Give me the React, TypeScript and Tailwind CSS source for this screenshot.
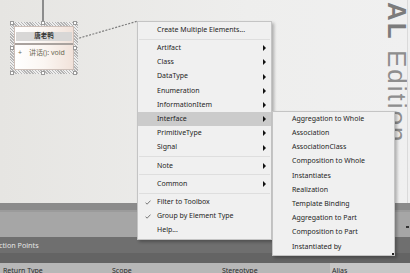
import React from "react";

type Item = { label?: string; sep?: boolean; arrow?: boolean; check?: boolean; active?: boolean };

const mainItems: Item[] = [
  { label: "Create Multiple Elements..." },
  { sep: true },
  { label: "Artifact", arrow: true },
  { label: "Class", arrow: true },
  { label: "DataType", arrow: true },
  { label: "Enumeration", arrow: true },
  { label: "InformationItem", arrow: true },
  { label: "Interface", arrow: true, active: true },
  { label: "PrimitiveType", arrow: true },
  { label: "Signal", arrow: true },
  { sep: true },
  { label: "Note", arrow: true },
  { sep: true },
  { label: "Common", arrow: true },
  { sep: true },
  { label: "Filter to Toolbox", check: true },
  { label: "Group by Element Type", check: true },
  { label: "Help..." },
];

const subItems = [
  "Aggregation to Whole",
  "Association",
  "AssociationClass",
  "Composition to Whole",
  "Instantiates",
  "Realization",
  "Template Binding",
  "Aggregation to Part",
  "Composition to Part",
  "Instantiated by",
];

function Arrow() {
  return <span className="ml-auto w-0 h-0 border-y-[3px] border-y-transparent border-l-[3px] border-l-[#111]" />;
}

function Check() {
  return (
    <svg className="absolute left-[7px] top-[5px]" width="6" height="5" viewBox="0 0 6 5">
      <path d="M0.5 2.6 L2.1 4.2 L5.5 0.6" stroke="#6a6a6a" strokeWidth="0.9" fill="none" />
    </svg>
  );
}

function Handle({ cls }: { cls: string }) {
  return <div className={`absolute w-[4px] h-[4px] bg-white border border-[#9a9a9a] ${cls}`} />;
}

export default function App() {
  return (
    <div className="relative w-[410px] h-[273px] overflow-hidden flex flex-col font-['Noto_Sans','Noto_Sans_CJK_SC',sans-serif] text-[7px] text-[#1e1e1e]">
      {/* Canvas */}
      <div className="relative h-[203px] shrink-0 bg-[linear-gradient(90deg,#e6e5e2,#eeeeed_60%,#f0f0f0)]">
        {/* watermark */}
        <div className="absolute left-[384px] top-[2px] [writing-mode:vertical-rl] font-['Liberation_Sans',sans-serif] text-[26px] leading-none tracking-[2px] whitespace-nowrap">
          <span className="font-bold text-[#7c7c7c]">AL</span>
          <span className="text-[#8e8e8e]"> Edition</span>
        </div>
        <div className="absolute right-[2px] top-0 bottom-0 w-px bg-[#dadada]" />

        {/* vertical connector from top */}
        <div className="absolute left-[42px] top-0 w-[2px] h-[22px] bg-[#8c8c8c]" />

        {/* dotted connector */}
        <svg className="absolute left-0 top-0" width="410" height="203">
          <line x1="76" y1="39" x2="138" y2="21" stroke="#7e7e7e" strokeWidth="1.2" strokeDasharray="2 1.4" />
        </svg>

        {/* class element */}
        <div className="absolute left-[10px] top-[22px] w-[68px] h-[52px] p-[4px] bg-[repeating-linear-gradient(45deg,#b4b4b4_0px,#b4b4b4_1px,#eeeeee_1px,#eeeeee_2px)]">
          <div className="w-full h-full bg-[linear-gradient(90deg,#ffffff,#fbf6f2_50%,#f1e2da)] border border-[#cdbfb8] flex flex-col">
            <div className="mt-[5px] mx-[1px] h-[9px] bg-[#d8d7d6] flex items-center justify-center text-[6.5px] font-bold text-[#333] leading-none">
              唐老鸭
            </div>
            <div className="mt-[2px] h-[2px] border-y border-[#a9a29e]" />
            <div className="flex items-center h-[10px] mt-[2px] text-[7px] text-[#6c6a55] leading-none">
              <span className="ml-[3px] w-[11px]">+</span>
              <span>讲话(): void</span>
            </div>
          </div>
          <Handle cls="left-0 -top-[1px]" />
          <Handle cls="left-[31px] -top-[1px]" />
          <Handle cls="left-[63px] -top-[1px]" />
          <Handle cls="left-0 top-[24px]" />
          <Handle cls="left-[63px] top-[24px]" />
          <Handle cls="left-0 top-[49px]" />
          <Handle cls="left-[31px] top-[49px]" />
          <Handle cls="left-[63px] top-[49px]" />
        </div>
      </div>

      {/* Bottom panels */}
      <div className="h-[7px] shrink-0 bg-[#8b8b8b]" />
      <div className="h-[27px] shrink-0 bg-[#a6a6a6] border-t-2 border-[#9b9b9b] relative">
        <div className="absolute right-[1px] top-[14px] w-[3px] h-[2px] bg-[#333]" />
      </div>
      <div className="h-[16px] shrink-0 bg-[#6f6f6f] flex items-center text-[#e6e6e6] text-[7.2px]">
        <span className="-ml-[1px]">ction Points</span>
      </div>
      <div className="h-[10px] shrink-0 bg-[#646464]" />
      <div className="h-[10px] shrink-0 bg-[#b7b7b7] flex text-[7px] text-[#2a2a2a] leading-none overflow-hidden">
        <div className="w-[109px] pl-[3px] pt-[4px]">Return Type</div>
        <div className="w-[110px] pl-[3px] pt-[4px]">Scope</div>
        <div className="w-[111px] pl-[3px] pt-[4px]">Stereotype</div>
        <div className="flex-1 pl-[2px] pt-[4px] bg-[#c6c6c6]">Alias</div>
      </div>

      {/* Context menu */}
      <div className="absolute left-[137px] top-[21px] w-[135px] bg-[#f0f0f0] border border-[#c4c4c4] shadow-[2px_2px_3px_rgba(0,0,0,0.28)] py-[1px] flex flex-col">
        {mainItems.map((it, i) =>
          it.sep ? (
            <div key={i} className="h-[4px] flex items-center">
              <div className="flex-1 mx-[1px] h-px bg-[#dedede]" />
            </div>
          ) : (
            <div
              key={i}
              className={`relative h-[14.2px] flex items-center pl-[19px] pr-[5px] whitespace-nowrap ${it.active ? "bg-[#cbcbcb]" : ""}`}
            >
              {it.check && <Check />}
              <span>{it.label}</span>
              {it.arrow && <Arrow />}
            </div>
          )
        )}
      </div>

      {/* Submenu */}
      <div className="absolute left-[272px] top-[111px] w-[123px] h-[145px] bg-[#f0f0f0] border border-[#c4c4c4] shadow-[2px_2px_3px_rgba(0,0,0,0.28)] flex flex-col">
        {subItems.map((s) => (
          <div key={s} className="h-[14.2px] shrink-0 flex items-center pl-[19px] whitespace-nowrap">
            {s}
          </div>
        ))}
        <div className="absolute right-0 bottom-0 w-[2px] h-[2px] bg-[#222]" />
      </div>
    </div>
  );
}
